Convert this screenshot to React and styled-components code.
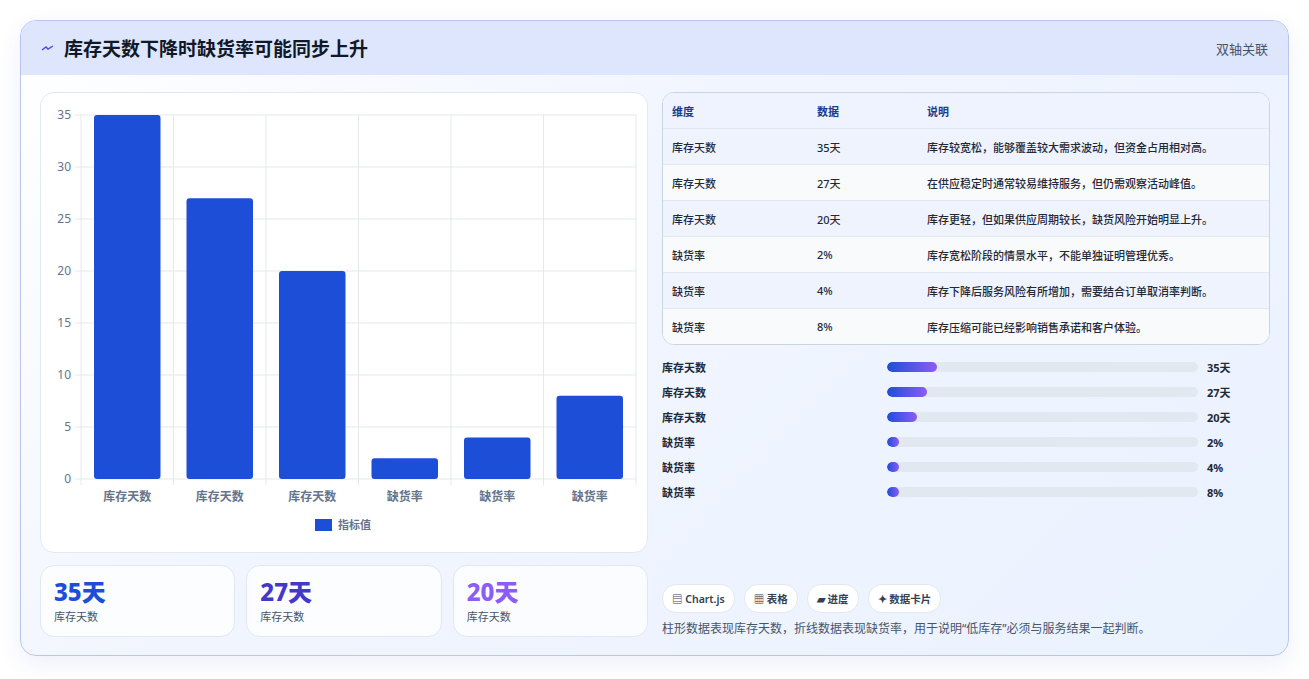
import styled, { createGlobalStyle } from "styled-components";

const Global = createGlobalStyle`
  html, body { margin: 0; background: #fff; }
  body { font-family: "Noto Sans", "Noto Sans CJK SC", sans-serif; color: #1e293b; }
`;

const Page = styled.div`padding: 20px 20px 21px 20px;`;

const Card = styled.div`
  height: 636px;
  box-sizing: border-box;
  border: 1px solid #b8c6ee;
  border-radius: 16px;
  overflow: hidden;
  background: linear-gradient(135deg, #ffffff 0%, #f1f5ff 40%, #eaf2ff 100%);
  box-shadow: 0 8px 24px rgba(30, 64, 175, 0.08);
  display: flex;
  flex-direction: column;
`;

const Header = styled.div`
  height: 55px;
  background: #dde6fd;
  display: flex;
  align-items: center;
  justify-content: space-between;
  padding: 0 20px;
`;

const Title = styled.h2`
  margin: 0;
  font-size: 19px;
  font-weight: 700;
  color: #111827;
  display: flex;
  align-items: center;
  gap: 10px;
`;

const Tag = styled.span`font-size: 13px; color: #475569;`;

const Body = styled.div`
  flex: 1;
  display: grid;
  grid-template-columns: 608px 608px;
  gap: 14px;
  padding: 17px 19px 18px 19px;
`;

const Col = styled.div`display: flex; flex-direction: column; gap: 12px;`;

const Panel = styled.div`
  background: #fff;
  border: 1px solid #e2e8f0;
  border-radius: 14px;
  height: 461px;
  box-sizing: border-box;
`;

const Stats = styled.div`display: grid; grid-template-columns: repeat(3, 1fr); gap: 11px;`;

const Stat = styled.div`
  background: rgba(255,255,255,0.75);
  border: 1px solid #e2e8f0;
  border-radius: 14px;
  height: 72px;
  box-sizing: border-box;
  padding: 10px 13px;
`;

const StatValue = styled.div`
  font-size: 24px;
  font-weight: 800;
  line-height: 32px;
  color: ${p => p.$color};
`;

const StatName = styled.div`font-size: 11px; color: #475569;`;

const Table = styled.div`
  border: 1px solid #cbd5e1;
  border-radius: 12px;
  overflow: hidden;
  background: #fff;
`;

const Row = styled.div`
  display: grid;
  grid-template-columns: 145px 110px 1fr;
  height: 35px;
  align-items: center;
  padding: 0 9px;
  font-size: 11px;
  font-weight: ${p => (p.$head ? 600 : 500)};
  color: ${p => (p.$head ? "#1e3a8a" : "#1f2937")};
  background: ${p => p.$bg};
  border-bottom: 1px solid #e2e8f0;
  &:last-child { border-bottom: none; }
`;

const Bars = styled.div`display: flex; flex-direction: column; gap: 9px; margin-top: 2px;`;

const BarRow = styled.div`
  display: grid;
  grid-template-columns: 225px 311px 1fr;
  gap: 0;
  align-items: center;
  height: 16px;
  font-size: 11px;
  font-weight: 600;
  color: #1f2937;
`;

const Track = styled.div`height: 10px; border-radius: 5px; background: #e2e8f0; overflow: hidden;`;
const Fill = styled.div`height: 100%; border-radius: 5px; background: linear-gradient(90deg, #1d4ed8, #8b5cf6);`;
const BarVal = styled.span`padding-left: 9px; font-weight: 700;`;

const Spacer = styled.div`flex: 1;`;

const Chips = styled.div`display: flex; gap: 9px;`;
const Chip = styled.span`
  background: #fff;
  border: 1px solid #e2e8f0;
  border-radius: 14px;
  padding: 6px 9px;
  font-size: 10.5px;
  font-weight: 600;
  color: #334155;
`;

const Caption = styled.p`margin: 6px 0 0; font-size: 12px; color: #475569;`;

const bars = [35, 27, 20, 2, 4, 8];
const labels = ["库存天数", "库存天数", "库存天数", "缺货率", "缺货率", "缺货率"];

const Chart = () => {
  const x0 = 40, x1 = 595, y0 = 22, y1 = 386;
  const w = (x1 - x0) / 6;
  const h = v => ((y1 - y0) * v) / 35;
  return (
    <svg width="608" height="461" viewBox="0 0 608 461">
      {[0, 5, 10, 15, 20, 25, 30, 35].map(t => {
        const y = y1 - h(t);
        return (
          <g key={t}>
            <line x1={x0 - 6} x2={x1} y1={y} y2={y} stroke="#e5e7eb" />
            <text x={x0 - 10} y={y + 4} textAnchor="end" fontSize="12" fill="#64748b" fontFamily="Noto Sans">{t}</text>
          </g>
        );
      })}
      {[0, 1, 2, 3, 4, 5, 6].map(i => (
        <line key={i} x1={x0 + i * w} x2={x0 + i * w} y1={y0} y2={y1 + 6} stroke="#e5e7eb" />
      ))}
      {bars.map((v, i) => (
        <g key={i}>
          <rect x={x0 + i * w + 13} y={y1 - h(v)} width={w - 26} height={h(v)} rx="3" fill="#1d4ed8" />
          <text x={x0 + i * w + w / 2} y={y1 + 22} textAnchor="middle" fontSize="12" fontWeight="600" fill="#64748b" fontFamily="Noto Sans CJK SC">{labels[i]}</text>
        </g>
      ))}
      <rect x="274" y="426" width="17" height="12" fill="#1d4ed8" />
      <text x="297" y="436" fontSize="11" fontWeight="600" fill="#64748b" fontFamily="Noto Sans CJK SC">指标值</text>
    </svg>
  );
};

const rows = [
  ["库存天数", "35天", "库存较宽松，能够覆盖较大需求波动，但资金占用相对高。"],
  ["库存天数", "27天", "在供应稳定时通常较易维持服务，但仍需观察活动峰值。"],
  ["库存天数", "20天", "库存更轻，但如果供应周期较长，缺货风险开始明显上升。"],
  ["缺货率", "2%", "库存宽松阶段的情景水平，不能单独证明管理优秀。"],
  ["缺货率", "4%", "库存下降后服务风险有所增加，需要结合订单取消率判断。"],
  ["缺货率", "8%", "库存压缩可能已经影响销售承诺和客户体验。"],
];
const fills = [16, 13, 9.5, 4, 4, 4];

export default function App() {
  return (
    <Page>
      <Global />
      <Card>
        <Header>
          <Title>
            <svg width="13" height="8" viewBox="0 0 13 8"><path d="M1 6 L5 3 L7 5 L12 2" stroke="#4f46e5" strokeWidth="1.4" fill="none" /></svg>
            库存天数下降时缺货率可能同步上升
          </Title>
          <Tag>双轴关联</Tag>
        </Header>
        <Body>
          <Col>
            <Panel><Chart /></Panel>
            <Stats>
              <Stat><StatValue $color="#1d4ed8">35天</StatValue><StatName>库存天数</StatName></Stat>
              <Stat><StatValue $color="#4338ca">27天</StatValue><StatName>库存天数</StatName></Stat>
              <Stat><StatValue $color="#8b5cf6">20天</StatValue><StatName>库存天数</StatName></Stat>
            </Stats>
          </Col>
          <Col>
            <Table>
              <Row $head $bg="#eef3ff"><span>维度</span><span>数据</span><span>说明</span></Row>
              {rows.map((r, i) => (
                <Row key={i} $bg={i % 2 ? "#f8fafc" : "#eff3fe"}>
                  <span>{r[0]}</span><span>{r[1]}</span><span>{r[2]}</span>
                </Row>
              ))}
            </Table>
            <Bars>
              {rows.map((r, i) => (
                <BarRow key={i}>
                  <span>{r[0]}</span>
                  <Track><Fill style={{ width: fills[i] + "%" }} /></Track>
                  <BarVal>{r[1]}</BarVal>
                </BarRow>
              ))}
            </Bars>
            <Spacer />
            <div>
              <Chips>
                <Chip>▤ Chart.js</Chip>
                <Chip>▦ 表格</Chip>
                <Chip>▰ 进度</Chip>
                <Chip>✦ 数据卡片</Chip>
              </Chips>
              <Caption>柱形数据表现库存天数，折线数据表现缺货率，用于说明“低库存”必须与服务结果一起判断。</Caption>
            </div>
          </Col>
        </Body>
      </Card>
    </Page>
  );
}
